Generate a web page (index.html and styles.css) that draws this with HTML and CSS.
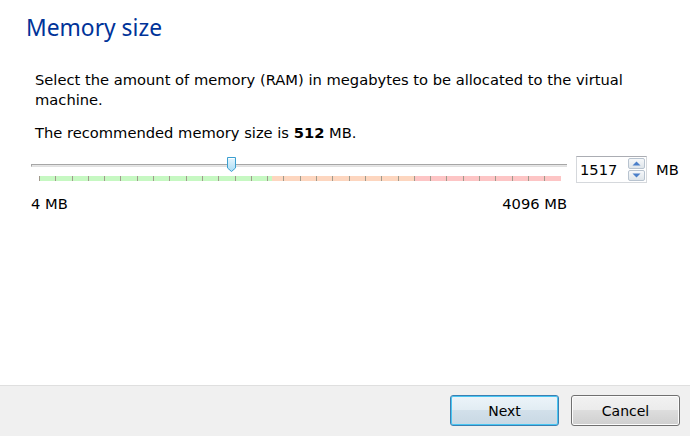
FILE: index.html
```html
<!DOCTYPE html>
<html>
<head>
<meta charset="utf-8">
<link rel="stylesheet" href="styles.css">
</head>
<body>
<div class="page">
  <main class="content">
    <h1 class="title">Memory size</h1>
    <p class="desc">Select the amount of memory (RAM) in megabytes to be allocated to the virtual machine.</p>
    <p class="rec">The recommended memory size is <b>512</b> MB.</p>
    <div class="slider-row">
      <div class="slider">
        <div class="track">
          <div class="thumb">
            <svg width="11" height="17" viewBox="0 0 11 17">
              <defs>
                <linearGradient id="tg" x1="0" y1="0" x2="0" y2="1">
                  <stop offset="0" stop-color="#e8f6fd"/>
                  <stop offset="1" stop-color="#a9dcf5"/>
                </linearGradient>
              </defs>
              <path d="M1.5 1.5 H9.5 V12 L5.5 15.5 L1.5 12 Z" fill="url(#tg)" stroke="#3c9fd0" stroke-width="1"/>
              <path d="M2.5 2.5 H8.5" stroke="#ffffff" stroke-width="1"/>
            </svg>
          </div>
        </div>
        <div class="scale"></div>
        <div class="limits"><span>4 MB</span><span>4096 MB</span></div>
      </div>
      <div class="spin">
        <span class="spin-val">1517</span>
        <div class="spin-btns">
          <div class="spin-btn">
            <svg width="9" height="5" viewBox="0 0 9 5"><path d="M0.5 4.5 L4.5 0.5 L8.5 4.5 Z" fill="#4a7fc9"/></svg>
          </div>
          <div class="spin-btn">
            <svg width="9" height="5" viewBox="0 0 9 5"><path d="M0.5 0.5 L4.5 4.5 L8.5 0.5 Z" fill="#4a7fc9"/></svg>
          </div>
        </div>
      </div>
      <span class="unit">MB</span>
    </div>
  </main>
  <footer class="footer">
    <button class="btn btn-default">Next</button>
    <button class="btn">Cancel</button>
  </footer>
</div>
</body>
</html>
```

FILE: styles.css
```css
* { box-sizing: border-box; }
html, body { margin: 0; padding: 0; background: #ffffff; }
body {
  width: 690px;
  height: 436px;
  overflow: hidden;
  font-family: "DejaVu Sans", Tahoma, sans-serif;
  font-size: 14.7px;
  color: #000000;
}
.page {
  width: 690px;
  height: 436px;
  display: flex;
  flex-direction: column;
}
.content {
  flex: 1;
  padding: 0 0 0 26px;
}
.title {
  margin: 13px 0 0 0;
  font-family: "Noto Sans", "Open Sans", sans-serif;
  font-weight: normal;
  font-size: 22.8px;
  line-height: 30px;
  color: #003399;
}
.desc {
  margin: 27px 0 0 9px;
  width: 625px;
  line-height: 20px;
}
.rec {
  margin: 13px 0 0 9px;
  line-height: 20px;
}
.rec b { font-weight: bold; }
.slider-row {
  display: flex;
  align-items: flex-start;
  margin: 13px 0 0 5px;
}
.slider {
  width: 536px;
}
.track {
  position: relative;
  height: 3px;
  margin-top: 8px;
  background: #e6e6e6;
  border-top: 1px solid #a6a6a6;
  border-left: 1px solid #a6a6a6;
  border-bottom: 1px solid #e0e0e0;
}
.thumb {
  position: absolute;
  left: 194px;
  top: -9px;
  width: 11px;
  height: 17px;
}
.thumb svg { display: block; }
.scale {
  margin: 9px 6px 0 8px;
  height: 5px;
  background:
    repeating-linear-gradient(to right, #a09a8c 0, #a09a8c 1px, transparent 1px, transparent 16.3px),
    linear-gradient(to right, #c6f8c2 0, #c6f8c2 233px, #fdd6bf 233px, #fdd6bf 375px, #fdc5c5 375px, #fdc5c5 100%);
}
.limits {
  display: flex;
  justify-content: space-between;
  margin-top: 13px;
  line-height: 20px;
}
.spin {
  display: flex;
  align-items: center;
  margin-left: 9px;
  width: 71px;
  height: 27px;
  border: 1px solid #d5d8dc;
  border-top-color: #abadb3;
  background: #ffffff;
  padding: 1px 1px 1px 3px;
}
.spin-val {
  flex: 1;
  line-height: 20px;
}
.spin-btns {
  display: flex;
  flex-direction: column;
  gap: 1px;
  width: 17px;
  height: 100%;
}
.spin-btn {
  flex: 1;
  display: flex;
  align-items: center;
  justify-content: center;
  border: 1px solid #b8c3cf;
  border-radius: 2px;
  background: linear-gradient(#f6f8fa, #dfe5ea);
}
.spin-btn svg { display: block; }
.unit {
  margin: 4px 0 0 9px;
  line-height: 20px;
}
.footer {
  height: 51px;
  flex: none;
  background: #f0f0f0;
  border-top: 1px solid #dfdfdf;
  display: flex;
  align-items: flex-start;
  justify-content: flex-end;
  gap: 12px;
  padding: 9px 10px 0 0;
}
.btn {
  width: 109px;
  height: 31px;
  font-family: "DejaVu Sans", Tahoma, sans-serif;
  font-size: 14px;
  color: #000000;
  border: 1px solid #707070;
  border-radius: 3px;
  background: linear-gradient(#f2f2f2 0, #ebebeb 50%, #dddddd 50%, #cfcfcf 100%);
  box-shadow: inset 0 0 0 1px #fcfcfc;
  padding: 0;
}
.btn-default {
  border-color: #3c7fb1;
  background: linear-gradient(#ecf4f9 0, #e1ecf3 50%, #d2e0ea 50%, #c8d8e4 100%);
  box-shadow: inset 0 0 0 1px #48c6f3;
}
```
